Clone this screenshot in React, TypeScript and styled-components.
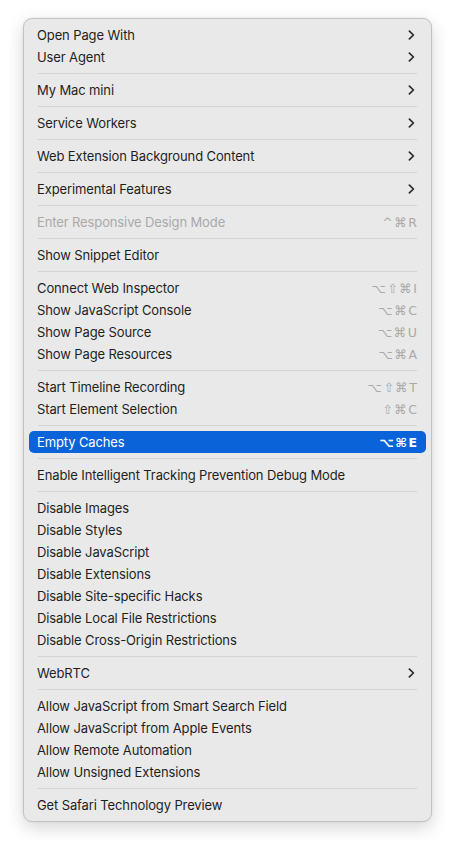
import React from "react"
import styled, {createGlobalStyle} from "styled-components"

const GlobalStyle = createGlobalStyle`
  html, body {
    margin: 0;
    padding: 0;
    background: #ffffff;
  }
  body {
    font-family: Inter, "Noto Sans", "Liberation Sans", sans-serif;
    -webkit-font-smoothing: antialiased;
  }
`

const StyledPage = styled.div`
  padding: 18px 23px;
`

const StyledMenu = styled.div`
  display: flex;
  flex-direction: column;
  padding: 5px;
  background: #e9e9e9;
  border: 1px solid #c2c2c2;
  border-radius: 9px;
  box-shadow: 0 6px 18px rgba(0, 0, 0, 0.16), 0 0 3px rgba(0, 0, 0, 0.06);
`

const StyledItem = styled.div<{$active?: boolean; $disabled?: boolean}>`
  display: flex;
  align-items: center;
  justify-content: space-between;
  height: 22px;
  padding: 0 9px 0 8px;
  border-radius: 5px;
  font-size: 13px;
  letter-spacing: -0.12px;
  background: ${props => props.$active ? '#0b63d9' : 'transparent'};
  color: ${props => props.$active ? '#ffffff' : props.$disabled ? '#a9a9a9' : '#1f1f1f'};
`

const StyledShortcut = styled.span<{$active?: boolean}>`
  font-family: "DejaVu Sans", Inter, sans-serif;
  font-size: 12.5px;
  letter-spacing: 1.5px;
  margin-right: -1.5px;
  font-weight: ${props => props.$active ? 700 : 400};
  color: ${props => props.$active ? '#ffffff' : '#a9a9a9'};
`

const StyledSeparator = styled.div`
  height: 11px;
  display: flex;
  align-items: center;
  padding: 0 9px;

  &::after {
    content: "";
    flex: 1;
    height: 1px;
    background: #d3d3d3;
  }
`

const StyledChevron = styled.svg`
  width: 7px;
  height: 10px;
  margin-right: 2px;
`

type Entry = {
    label: string
    shortcut?: string
    submenu?: boolean
    disabled?: boolean
    active?: boolean
}

const groups: Entry[][] = [
    [
        {label: "Open Page With", submenu: true},
        {label: "User Agent", submenu: true},
    ],
    [{label: "My Mac mini", submenu: true}],
    [{label: "Service Workers", submenu: true}],
    [{label: "Web Extension Background Content", submenu: true}],
    [{label: "Experimental Features", submenu: true}],
    [{label: "Enter Responsive Design Mode", shortcut: "^⌘R", disabled: true}],
    [{label: "Show Snippet Editor"}],
    [
        {label: "Connect Web Inspector", shortcut: "⌥⇧⌘I"},
        {label: "Show JavaScript Console", shortcut: "⌥⌘C"},
        {label: "Show Page Source", shortcut: "⌥⌘U"},
        {label: "Show Page Resources", shortcut: "⌥⌘A"},
    ],
    [
        {label: "Start Timeline Recording", shortcut: "⌥⇧⌘T"},
        {label: "Start Element Selection", shortcut: "⇧⌘C"},
    ],
    [{label: "Empty Caches", shortcut: "⌥⌘E", active: true}],
    [{label: "Enable Intelligent Tracking Prevention Debug Mode"}],
    [
        {label: "Disable Images"},
        {label: "Disable Styles"},
        {label: "Disable JavaScript"},
        {label: "Disable Extensions"},
        {label: "Disable Site-specific Hacks"},
        {label: "Disable Local File Restrictions"},
        {label: "Disable Cross-Origin Restrictions"},
    ],
    [{label: "WebRTC", submenu: true}],
    [
        {label: "Allow JavaScript from Smart Search Field"},
        {label: "Allow JavaScript from Apple Events"},
        {label: "Allow Remote Automation"},
        {label: "Allow Unsigned Extensions"},
    ],
    [{label: "Get Safari Technology Preview"}],
]

const Chevron = (): React.JSX.Element => (
    <StyledChevron viewBox="0 0 7 10">
        <path d="M1.4 1.2 L5.4 5 L1.4 8.8" fill="none" stroke="#2b2b2b" strokeWidth="1.7"
              strokeLinecap="round" strokeLinejoin="round"/>
    </StyledChevron>
)

const App = (): React.JSX.Element => {
    return (
        <StyledPage>
            <GlobalStyle/>
            <StyledMenu>
                {groups.map((group, i) => (
                    <React.Fragment key={i}>
                        {i > 0 && <StyledSeparator/>}
                        {group.map(entry => (
                            <StyledItem key={entry.label} $active={entry.active} $disabled={entry.disabled}>
                                <span>{entry.label}</span>
                                {entry.submenu && <Chevron/>}
                                {entry.shortcut && (
                                    <StyledShortcut $active={entry.active}>{entry.shortcut}</StyledShortcut>
                                )}
                            </StyledItem>
                        ))}
                    </React.Fragment>
                ))}
            </StyledMenu>
        </StyledPage>
    )
}

export default App
